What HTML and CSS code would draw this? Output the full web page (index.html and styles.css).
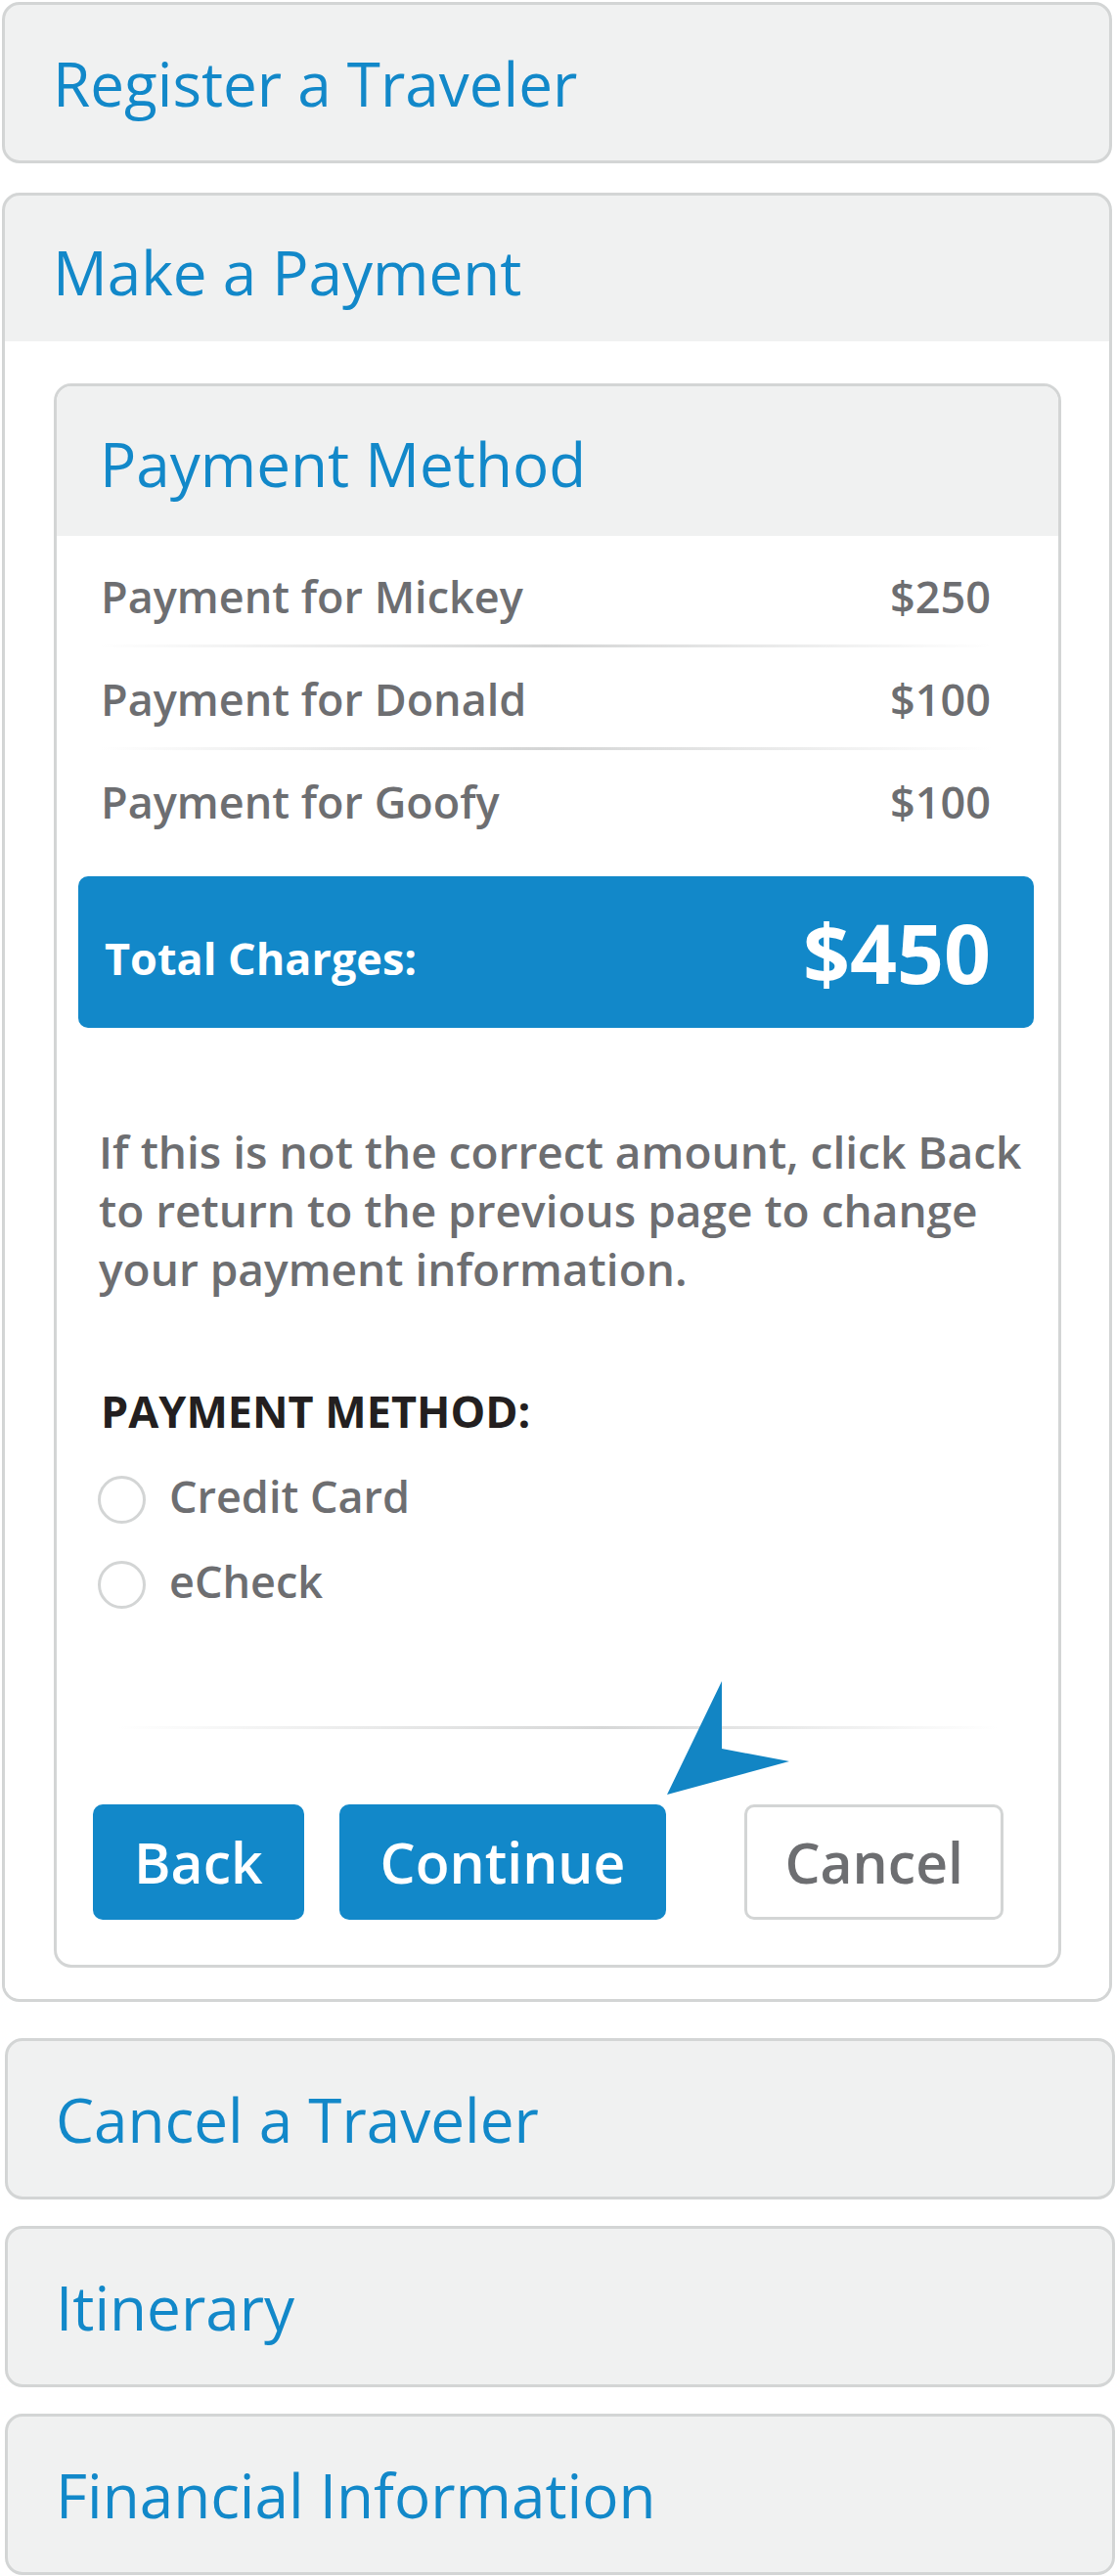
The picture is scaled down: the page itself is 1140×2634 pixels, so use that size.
FILE: index.html
```html
<!DOCTYPE html>
<html>
<head>
	<meta charset="utf-8">
	<meta name="viewport" content="width=device-width, initial-scale=1">
	<title>Make a Payment</title>
	<link rel="stylesheet" href="styles.css">
</head>
<body>
	<div class="accordion">
		<section class="panel panel_closed">
			<h2 class="panel_title">Register a Traveler</h2>
		</section>

		<section class="panel panel_open">
			<div class="panel_head">
				<h2 class="panel_title">Make a Payment</h2>
			</div>
			<div class="panel_body">
				<div class="card">
					<div class="card_head">
						<h3 class="card_title">Payment Method</h3>
					</div>
					<div class="card_body">
						<ul class="charges">
							<li><span>Payment for Mickey</span><span>$250</span></li>
							<li><span>Payment for Donald</span><span>$100</span></li>
							<li><span>Payment for Goofy</span><span>$100</span></li>
						</ul>
						<div class="total">
							<span class="total_label">Total Charges:</span>
							<span class="total_amount">$450</span>
						</div>
						<p class="note">If this is not the correct amount, click Back to return to the previous page to change your payment information.</p>
						<h4 class="method_title">PAYMENT METHOD:</h4>
						<label class="radio"><input type="radio" name="method"><span>Credit Card</span></label>
						<label class="radio"><input type="radio" name="method"><span>eCheck</span></label>
						<hr class="divider">
						<div class="actions">
							<button class="btn btn_blue">Back</button>
							<button class="btn btn_blue btn_continue">Continue</button>
							<button class="btn btn_plain">Cancel</button>
							<svg class="pointer" width="135" height="125" viewBox="0 0 135 125">
								<polygon points="60,4 60,73 129,86 4,120" fill="#1285c4"/>
							</svg>
						</div>
					</div>
				</div>
			</div>
		</section>

		<section class="panel panel_closed panel_low">
			<h2 class="panel_title">Cancel a Traveler</h2>
		</section>
		<section class="panel panel_closed panel_low">
			<h2 class="panel_title">Itinerary</h2>
		</section>
		<section class="panel panel_closed panel_low">
			<h2 class="panel_title">Financial Information</h2>
		</section>
	</div>
</body>
</html>
```

FILE: styles.css
```css
body {
	margin: 0;
	background: #fff;
	font-family: "Open Sans", "Liberation Sans", sans-serif;
}
.accordion {
	padding-top: 2px;
}
.panel {
	border: 3px solid #d3d5d5;
	border-radius: 18px;
	background: #f0f1f1;
	margin: 0 3px 0 2px;
	box-sizing: border-box;
}
.panel_closed {
	height: 165px;
	display: flex;
	align-items: center;
}
.panel_low {
	margin: 27px 0 0 5px;
}
.panel_open {
	margin-top: 30px;
	margin-bottom: 37px;
	overflow: hidden;
}
.panel_title, .card_title {
	margin: 0;
	font-size: 62px;
	font-weight: 400;
	color: #1288c9;
	padding-left: 49px;
}
.panel_head {
	height: 149px;
	padding-top: 6px;
	box-sizing: border-box;
	display: flex;
	align-items: center;
}
.panel_body {
	background: #fff;
	padding: 43px 49px 32px 50px;
}

.card {
	border: 3px solid #d3d5d5;
	border-radius: 18px;
	overflow: hidden;
	background: #fff;
}
.card_head {
	background: #f0f1f1;
	height: 153px;
	padding-top: 4px;
	box-sizing: border-box;
	display: flex;
	align-items: center;
}
.card_title {
	padding-left: 44px;
}
.card_body {
	padding: 9px 0 46px;
}

.charges {
	list-style: none;
	margin: 0 69px 0 45px;
	padding: 0;
}
.charges li {
	display: flex;
	justify-content: space-between;
	font-size: 45px;
	font-weight: 600;
	line-height: 60px;
	color: #6d6e71;
	padding: 23px 0 19px;
	border-bottom: 3px solid #dcdddd;
	border-image: linear-gradient(90deg, rgba(220, 221, 221, 0), #d4d5d5 50%, rgba(220, 221, 221, 0)) 1;
}
.charges li:last-child {
	border: 0;
	border-image: none;
}

.total {
	margin: 27px 25px 0 22px;
	height: 155px;
	background: #1288c9;
	border-radius: 10px;
	display: flex;
	align-items: center;
	justify-content: space-between;
	padding: 0 44px 0 27px;
	color: #fff;
	font-weight: 700;
}
.total_label {
	font-size: 45px;
	padding-top: 11px;
}
.total_amount {
	font-size: 84px;
}

.note {
	margin: 96px 20px 0 43px;
	font-size: 46px;
	font-weight: 600;
	line-height: 60px;
	color: #6d6e71;
}
.method_title {
	margin: 86px 0 0 45px;
	font-size: 45px;
	line-height: 60px;
	font-weight: 700;
	color: #231f20;
}
.radio {
	display: flex;
	align-items: center;
	margin: 27px 0 0 42px;
	font-size: 45px;
	font-weight: 600;
	line-height: 60px;
	color: #6d6e71;
}
.radio input {
	appearance: none;
	width: 49px;
	height: 49px;
	box-sizing: border-box;
	border: 3px solid #d3d5d5;
	border-radius: 50%;
	margin: 7px 24px 0 0;
	background: #fff;
}

.divider {
	margin: 118px 62px 0;
	height: 3px;
	border: 0;
	background: linear-gradient(90deg, rgba(222, 223, 223, 0), #d6d7d7 55%, rgba(222, 223, 223, 0));
}

.actions {
	position: relative;
	display: flex;
	margin-top: 77px;
	padding-left: 37px;
}
.btn {
	height: 118px;
	padding: 0 42px;
	box-sizing: border-box;
	border: 0;
	border-radius: 10px;
	font-family: "Open Sans", "Liberation Sans", sans-serif;
	font-size: 57px;
	font-weight: 600;
	line-height: 118px;
}
.btn_blue {
	background: #1288c9;
	color: #fff;
}
.btn_continue {
	margin-left: 36px;
}
.btn_plain {
	margin-left: 80px;
	padding: 0 38px;
	background: #fff;
	border: 3px solid #d3d5d5;
	color: #6d6e71;
	line-height: 112px;
}
.pointer {
	position: absolute;
	left: 620px;
	top: -130px;
}
```
